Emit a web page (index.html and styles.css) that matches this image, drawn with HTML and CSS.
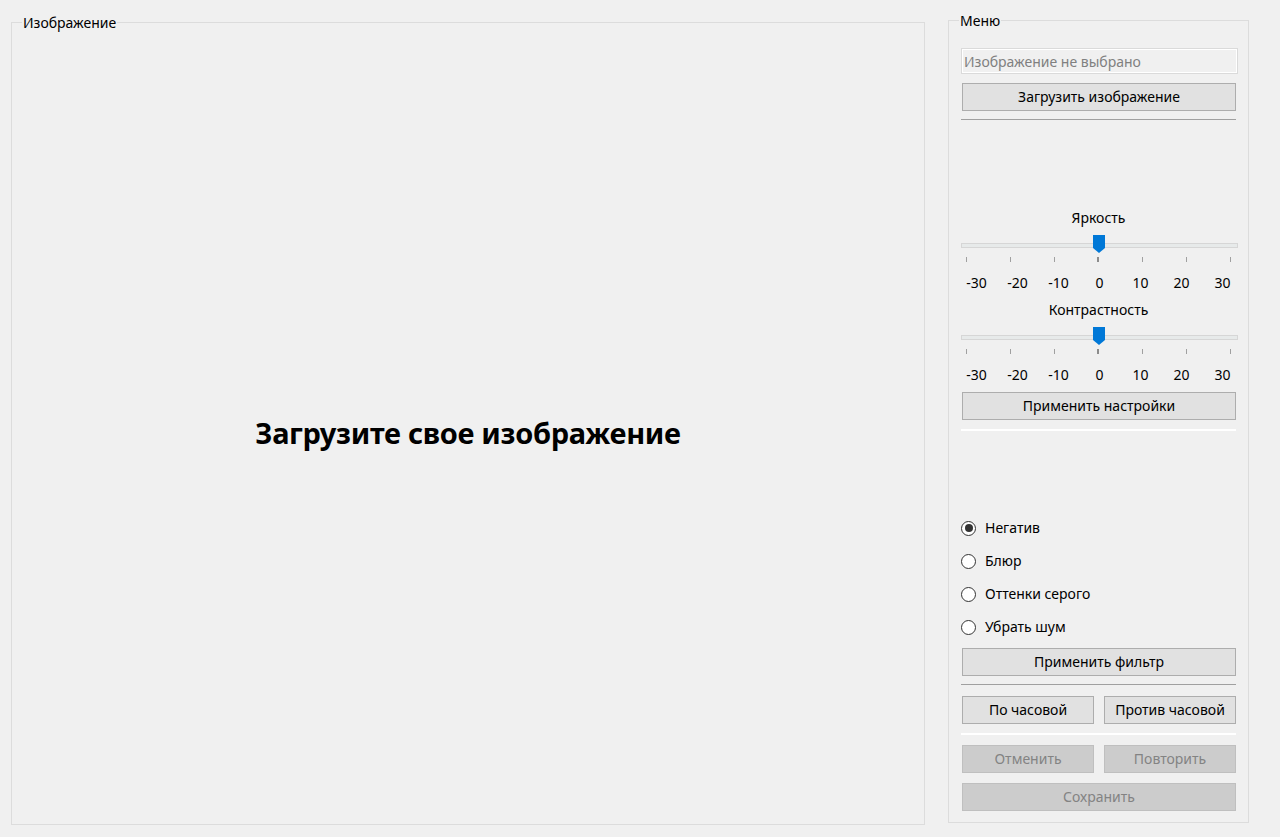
FILE: index.html
```html
<!DOCTYPE html>
<html lang="ru">
<head>
<meta charset="utf-8">
<title>Редактор изображений</title>
<link rel="stylesheet" href="styles.css">
</head>
<body>
<div class="app">
  <section class="group group-image">
    <span class="group-title">Изображение</span>
    <div class="placeholder">Загрузите свое изображение</div>
  </section>

  <section class="group group-menu">
    <span class="group-title">Меню</span>
    <div class="textbox">Изображение не выбрано</div>
    <button class="btn btn-full btn-load">Загрузить изображение</button>
    <div class="sep sep-gray sep-1"></div>

    <div class="slider-label label-bright">Яркость</div>
    <div class="slider">
      <div class="track"></div>
      <svg class="thumb" width="12" height="18" viewBox="0 0 12 18"><path d="M0 0H12V13L6 18L0 13Z" fill="#0078d7"/></svg>
      <div class="ticks"><i></i><i></i><i></i><i class="mid"></i><i></i><i></i><i></i></div>
    </div>
    <div class="scale"><span>-30</span><span>-20</span><span>-10</span><span>0</span><span>10</span><span>20</span><span>30</span></div>

    <div class="slider-label label-contrast">Контрастность</div>
    <div class="slider">
      <div class="track"></div>
      <svg class="thumb" width="12" height="18" viewBox="0 0 12 18"><path d="M0 0H12V13L6 18L0 13Z" fill="#0078d7"/></svg>
      <div class="ticks"><i></i><i></i><i></i><i class="mid"></i><i></i><i></i><i></i></div>
    </div>
    <div class="scale"><span>-30</span><span>-20</span><span>-10</span><span>0</span><span>10</span><span>20</span><span>30</span></div>

    <button class="btn btn-full btn-apply">Применить настройки</button>
    <div class="sep sep-white sep-2"></div>

    <div class="radios">
      <label class="radio"><span class="dot checked"></span>Негатив</label>
      <label class="radio"><span class="dot"></span>Блюр</label>
      <label class="radio"><span class="dot"></span>Оттенки серого</label>
      <label class="radio"><span class="dot"></span>Убрать шум</label>
    </div>

    <button class="btn btn-full btn-filter">Применить фильтр</button>
    <div class="sep sep-gray sep-3"></div>

    <div class="row row-rotate">
      <button class="btn">По часовой</button>
      <button class="btn">Против часовой</button>
    </div>
    <div class="sep sep-white sep-4"></div>

    <div class="row row-undo">
      <button class="btn disabled">Отменить</button>
      <button class="btn disabled">Повторить</button>
    </div>
    <button class="btn btn-full disabled btn-save">Сохранить</button>
  </section>
</div>
</body>
</html>
```

FILE: styles.css
```css
* { box-sizing: border-box; }

html, body {
  margin: 0;
  padding: 0;
  background: #f0f0f0;
  width: 1280px;
  height: 837px;
  overflow: hidden;
  font-family: "Noto Sans", "Open Sans", sans-serif;
  font-size: 14px;
  color: #000;
}

.app {
  display: flex;
  align-items: flex-start;
  padding: 20px 0 0 11px;
  gap: 23px;
}

.group {
  position: relative;
  border: 1px solid #dcdcdc;
}

.group-title {
  position: absolute;
  background: #f0f0f0;
  padding: 0 1px;
  line-height: 18px;
  white-space: nowrap;
}

.group-image {
  margin-top: 2px;
  width: 914px;
  height: 803px;
  display: flex;
  align-items: center;
  justify-content: center;
  padding-top: 18px;
}

.group-image .group-title {
  left: 10px;
  top: -9px;
}

.placeholder {
  font-size: 29px;
  font-weight: 700;
  letter-spacing: -0.3px;
}

.group-menu {
  width: 301px;
  height: 803px;
  padding: 27px 10px 0 12px;
  display: flex;
  flex-direction: column;
}

.group-menu .group-title {
  left: 10px;
  top: -9px;
}

.textbox {
  height: 26px;
  border: 1px solid #dadada;
  box-shadow: inset 0 0 0 1px #fff;
  background: #f0f0f0;
  color: #808080;
  line-height: 25px;
  padding-left: 2px;
  white-space: nowrap;
}

.btn {
  display: block;
  height: 28px;
  border: 1px solid #adadad;
  background: #e1e1e1;
  font: inherit;
  color: #000;
  padding: 0;
  line-height: 26px;
  text-align: center;
}

.btn.disabled {
  background: #cccccc;
  border-color: #bfbfbf;
  color: #838383;
}

.btn-full {
  margin-left: 1px;
  margin-right: 2px;
}

.btn-load { margin-top: 9px; }

.sep { height: 1px; margin-right: 2px; }
.sep-gray { background: #a0a0a0; }
.sep-white { background: #ffffff; height: 2px; }
.sep-1 { margin-top: 8px; }

.slider-label {
  text-align: center;
  line-height: 16px;
  height: 16px;
  padding-right: 2px;
}
.label-bright { margin-top: 90px; }
.label-contrast { margin-top: 11px; }

.slider {
  position: relative;
  height: 28px;
  margin-top: 9px;
}

.track {
  margin-top: 8px;
  height: 5px;
  border: 1px solid #d6d6d6;
  background: #e7eaea;
}

.thumb {
  position: absolute;
  left: 132px;
  top: 0;
  display: block;
}

.ticks {
  margin-top: 9px;
  height: 5px;
  display: flex;
  justify-content: space-between;
  padding: 0 7px 0 5px;
}

.ticks i {
  display: block;
  width: 1px;
  height: 5px;
  background: #a0a0a0;
}

.ticks i.mid {
  width: 2px;
  background: #8c8c8c;
}

.scale {
  display: grid;
  grid-template-columns: repeat(7, 41px);
  margin-left: -5px;
  margin-top: 12px;
  line-height: 16px;
  height: 16px;
}

.scale span { text-align: center; }

.btn-apply { margin-top: 9px; }
.sep-2 { margin-top: 9px; }

.radios {
  margin-top: 89px;
  display: flex;
  flex-direction: column;
  gap: 17px;
}

.radio {
  display: flex;
  align-items: center;
  gap: 9px;
  height: 16px;
  line-height: 16px;
}

.dot {
  width: 15px;
  height: 15px;
  border-radius: 50%;
  border: 1px solid #333;
  background: #fff;
  position: relative;
  flex: none;
}

.dot.checked::after {
  content: "";
  position: absolute;
  left: 2.5px;
  top: 2.5px;
  width: 8px;
  height: 8px;
  border-radius: 50%;
  background: #333;
}

.btn-filter { margin-top: 13px; }
.sep-3 { margin-top: 8px; }

.row {
  display: flex;
  gap: 10px;
  padding: 0 2px 0 1px;
}

.row .btn { width: 132px; }

.row-rotate { margin-top: 11px; }
.sep-4 { margin-top: 9px; }
.row-undo { margin-top: 10px; }
.btn-save { margin-top: 10px; }
```
